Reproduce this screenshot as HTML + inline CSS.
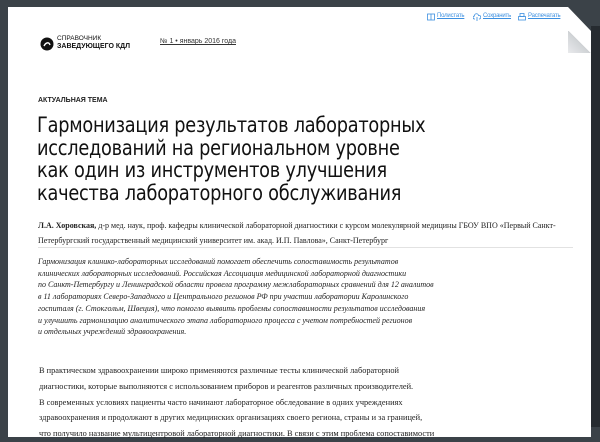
<!DOCTYPE html>
<html><head><meta charset="utf-8"><style>
*{margin:0;padding:0;box-sizing:border-box}
body{width:600px;height:427px;overflow:hidden;background:#3b4248;position:relative;font-family:"Liberation Serif",serif;color:#222}
.shadow{position:absolute;left:591px;top:26px;width:9px;height:401px;background:#262b30}
.page{position:absolute;left:8px;top:7px;width:583px;height:430px;background:#fff;clip-path:polygon(0 0,560px 0,583px 24px,583px 100%,0 100%)}
.fold{position:absolute;left:568px;top:31px;width:23px;height:22px;background:linear-gradient(225deg,#fff 0,#fff 50%,#cfd2d5 50%,#e9eaec 100%)}
.a{position:absolute;white-space:nowrap}
.lk{position:absolute;top:13px;font:6px "Liberation Sans",sans-serif;letter-spacing:-0.2px;color:#3b8fe0;white-space:nowrap}
.lk span{text-decoration:underline}
.lk svg{position:absolute;left:-10px;top:0}
.logo{left:40px;top:34px}
.date{left:160px;top:38px;font:7px "Liberation Sans",sans-serif;color:#333;text-decoration:underline}
.rub{left:38px;top:97px;font:bold 7px "Liberation Sans",sans-serif}
.title{left:37px;top:115px;font:21.5px/22.5px "DejaVu Sans","Liberation Sans",sans-serif;color:#111;letter-spacing:-0.3px;transform:scaleX(0.825);transform-origin:0 0}
.auth{left:38px;top:218px;font:8px/15px "Liberation Serif",serif}
.line{position:absolute;left:38px;top:247px;width:535px;height:1px;background:#e2e2e2}
.abs{left:38px;top:256px;font:italic 8px/11.7px "Liberation Serif",serif;color:#222}
.body{left:39px;top:363px;font:8.35px/15.8px "Liberation Serif",serif}
</style></head><body>
<div class="shadow"></div>
<div class="page"></div>
<div class="fold"></div>
<div class="lk" style="left:437px"><svg width="8" height="8" viewBox="0 0 8 8"><rect x="0.5" y="1" width="7" height="6" fill="none" stroke="#3b8fe0" stroke-width="0.8"/><line x1="4" y1="1" x2="4" y2="7" stroke="#3b8fe0" stroke-width="0.8"/></svg><span>Полистать</span></div>
<div class="lk" style="left:483px"><svg width="8" height="8" viewBox="0 0 8 8"><path d="M2 6H1.5A1.5 1.5 0 0 1 1.5 3 2 2 0 0 1 5.5 2.5 1.6 1.6 0 0 1 6.5 6H6M4 4v4" fill="none" stroke="#3b8fe0" stroke-width="0.8"/></svg><span>Сохранить</span></div>
<div class="lk" style="left:528px"><svg width="8" height="8" viewBox="0 0 8 8"><rect x="2" y="0.5" width="4" height="3" fill="none" stroke="#3b8fe0" stroke-width="0.8"/><rect x="0.5" y="3.5" width="7" height="3.5" fill="none" stroke="#3b8fe0" stroke-width="0.8"/></svg><span>Распечатать</span></div>
<div class="a logo">
<svg width="14" height="14" viewBox="0 0 14 14" style="position:absolute;left:0;top:3px"><circle cx="7" cy="7" r="6.5" fill="#111"/><path d="M4 9 C6 5,9 5,10 8" stroke="#fff" stroke-width="1.4" fill="none"/></svg>
<div style="position:absolute;left:17px;top:1px;font:6.5px/8px 'Liberation Sans',sans-serif;color:#111">СПРАВОЧНИК<br><b style="font-size:7px">ЗАВЕДУЮЩЕГО КДЛ</b></div>
</div>
<div class="a date">№ 1 • январь 2016 года</div>
<div class="a rub">АКТУАЛЬНАЯ ТЕМА</div>
<div class="a title">Гармонизация результатов лабораторных<br>исследований на региональном уровне<br>как один из инструментов улучшения<br>качества лабораторного обслуживания</div>
<div class="a auth"><b>Л.А. Хоровская,</b> д-р мед. наук, проф. кафедры клинической лабораторной диагностики с курсом молекулярной медицины ГБОУ ВПО «Первый Санкт-<br>Петербургский государственный медицинский университет им. акад. И.П. Павлова», Санкт-Петербург</div>
<div class="line"></div>
<div class="a abs">Гармонизация клинико-лабораторных исследований помогает обеспечить сопоставимость результатов<br>клинических лабораторных исследований. Российская Ассоциация медицинской лабораторной диагностики<br>по Санкт-Петербургу и Ленинградской области провела программу межлабораторных сравнений для 12 аналитов<br>в 11 лабораториях Северо-Западного и Центрального регионов РФ при участии лаборатории Каролинского<br>госпиталя (г. Стокгольм, Швеция), что помогло выявить проблемы сопоставимости результатов исследования<br>и улучшить гармонизацию аналитического этапа лабораторного процесса с учетом потребностей регионов<br>и отдельных учреждений здравоохранения.</div>
<div class="a body">В практическом здравоохранении широко применяются различные тесты клинической лабораторной<br>диагностики, которые выполняются с использованием приборов и реагентов различных производителей.<br>В современных условиях пациенты часто начинают лабораторное обследование в одних учреждениях<br>здравоохранения и продолжают в других медицинских организациях своего региона, страны и за границей,<br>что получило название мультицентровой лабораторной диагностики. В связи с этим проблема сопоставимости</div>
</body></html>
